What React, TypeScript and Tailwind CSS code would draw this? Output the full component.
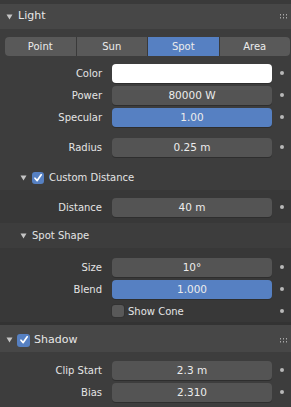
import type { ReactNode } from 'react'

const font = { fontFamily: '"DejaVu Sans", "Liberation Sans", sans-serif' }

function Triangle() {
  return (
    <svg width="7" height="6" viewBox="0 0 7 6" className="shrink-0">
      <path d="M0.5 0.5 L6.5 0.5 L3.5 5.5 Z" fill="#c4c4c4" />
    </svg>
  )
}

function Grip() {
  return (
    <svg width="7" height="5" viewBox="0 0 7 5" className="shrink-0">
      {[0, 3, 6].map((x) =>
        [0, 3].map((y) => <rect key={`${x}-${y}`} x={x} y={y} width="1" height="1.5" fill="#a8a8a8" />),
      )}
    </svg>
  )
}

function Check({ on = true, size = 12 }: { on?: boolean; size?: number }) {
  return (
    <div
      className={`flex shrink-0 items-center justify-center rounded-[3px] ${on ? 'bg-[#5680c2]' : 'bg-[#595959] shadow-[0_0_0_1px_#333]'}`}
      style={{ width: size, height: size }}
    >
      {on && (
        <svg width="10" height="10" viewBox="0 0 10 10">
          <path d="M2 5.2 L4.2 7.6 L8.2 1.8" fill="none" stroke="#fff" strokeWidth="1.7" strokeLinecap="round" strokeLinejoin="round" />
        </svg>
      )}
    </div>
  )
}

function Dot() {
  return <div className="h-[4px] w-[4px] rounded-full bg-[#b8b8b8]" />
}

function Field({ value, tone = 'gray' }: { value?: string; tone?: 'gray' | 'blue' | 'white' }) {
  const bg = tone === 'blue' ? 'bg-[#5680c2]' : tone === 'white' ? 'bg-white' : 'bg-[#545454]'
  return (
    <div className={`h-[19px] rounded-[4px] ${bg} text-center text-[10.5px] leading-[19px] text-[#ececec] shadow-[0_1px_0_#2e2e2e]`}>
      {value}
    </div>
  )
}

function Row({ label, children }: { label?: string; children: ReactNode }) {
  return (
    <div className="flex h-[22px] items-center">
      <div className="w-[102px] text-right text-[10px] text-[#e4e4e4]">{label}</div>
      <div className="ml-[10px] w-[160px]">{children}</div>
      <div className="flex w-[19px] justify-center">
        <Dot />
      </div>
    </div>
  )
}

function SubHeader({ title, checked }: { title: string; checked?: boolean }) {
  return (
    <div className="flex h-[25px] items-center gap-[5px] bg-[#3d3d3d] pl-[20px] text-[10px] text-[#e4e4e4]">
      <Triangle />
      {checked && <Check />}
      <span>{title}</span>
    </div>
  )
}

export default function App() {
  const tabs = ['Point', 'Sun', 'Spot', 'Area']
  return (
    <div className="h-[407px] w-[291px] overflow-hidden bg-[#333333]" style={font}>
      <div className="h-[4px] bg-[#3a3a3a]" />

      {/* Light panel */}
      <div className="flex h-[25px] items-center bg-[#474747] pl-[6px] pr-[4px] text-[11px] text-[#e8e8e8]">
        <Triangle />
        <span className="ml-[5px]">Light</span>
        <div className="ml-auto">
          <Grip />
        </div>
      </div>
      <div className="bg-[#3d3d3d] pt-[8px]">
        <div className="mx-[5px] mr-[1px] flex h-[19px] gap-px overflow-hidden rounded-[4px] bg-[#3a3a3a]">
          {tabs.map((t) => (
            <div
              key={t}
              className={`flex-1 text-center text-[10px] leading-[19px] text-[#ececec] ${t === 'Spot' ? 'bg-[#5680c2]' : 'bg-[#595959]'}`}
            >
              {t}
            </div>
          ))}
        </div>
        <div className="mt-[6px]">
          <Row label="Color">
            <Field tone="white" />
          </Row>
          <Row label="Power">
            <Field value="80000 W" />
          </Row>
          <Row label="Specular">
            <Field value="1.00" tone="blue" />
          </Row>
          <div className="h-[8px]" />
          <Row label="Radius">
            <Field value="0.25 m" />
          </Row>
        </div>
        <div className="h-[7px]" />

        <SubHeader title="Custom Distance" checked />
        <div className="bg-[#383838] pt-[6px] pb-[5px]">
          <Row label="Distance">
            <Field value="40 m" />
          </Row>
        </div>

        <SubHeader title="Spot Shape" />
        <div className="bg-[#383838] pt-[8px]">
          <Row label="Size">
            <Field value="10°" />
          </Row>
          <Row label="Blend">
            <Field value="1.000" tone="blue" />
          </Row>
          <Row>
            <div className="flex items-center gap-[4px] text-[10px] text-[#e4e4e4]">
              <Check on={false} />
              <span>Show Cone</span>
            </div>
          </Row>
        </div>
      </div>

      <div className="h-[3px]" />

      {/* Shadow panel */}
      <div className="flex h-[27px] items-center bg-[#474747] pl-[6px] pr-[4px] pt-[3px] text-[11px] text-[#e8e8e8]">
        <Triangle />
        <div className="ml-[4px]">
          <Check size={13} />
        </div>
        <span className="ml-[4px]">Shadow</span>
        <div className="ml-auto">
          <Grip />
        </div>
      </div>
      <div className="bg-[#3d3d3d] pt-[7px] pb-[10px]">
        <Row label="Clip Start">
          <Field value="2.3 m" />
        </Row>
        <Row label="Bias">
          <Field value="2.310" />
        </Row>
      </div>
    </div>
  )
}
